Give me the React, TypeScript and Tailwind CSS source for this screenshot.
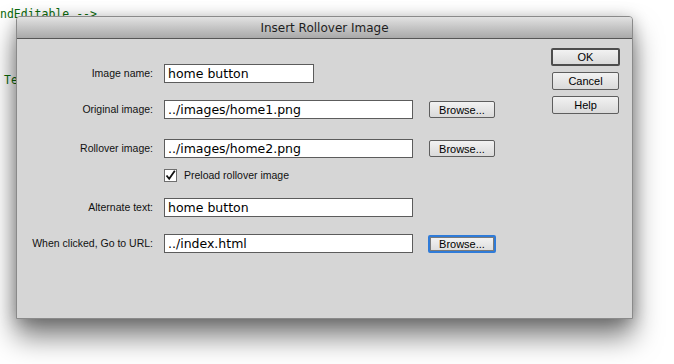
import React from 'react';

const labelFont = "font-['Liberation_Sans',Arial,sans-serif]";
const fieldFont = "font-['DejaVu_Sans',Verdana,sans-serif]";

const Field = ({ value, wide = true }: { value: string; wide?: boolean }) => (
  <div
    className={`h-[19px] ${wide ? 'w-[249px]' : 'w-[150px]'} border border-[#5c5c5c] bg-white pl-[3px] text-[12.5px] leading-[17px] text-black ${fieldFont} whitespace-nowrap overflow-hidden`}
  >
    {value}
  </div>
);

const Label = ({ children }: { children: React.ReactNode }) => (
  <div className={`w-[147px] shrink-0 pr-[11px] text-right text-[10.5px] text-[#111] ${labelFont}`}>
    {children}
  </div>
);

const Browse = ({ focused = false }: { focused?: boolean }) =>
  focused ? (
    <button className={`ml-[15px] h-[18px] w-[68px] rounded-[2px] border-2 border-[#2f7bd8] bg-linear-to-b from-[#f4f4f4] to-[#dcdcdc] text-[11px] leading-[12px] text-black shadow-[inset_0_0_0_1px_#7a7a7a] ${labelFont}`}>
      Browse...
    </button>
  ) : (
    <button className={`ml-[16px] h-[17px] w-[66px] rounded-[2px] border border-[#5e5e5e] bg-linear-to-b from-[#f2f2f2] to-[#dadada] text-[11px] leading-[14px] text-black ${labelFont}`}>
      Browse...
    </button>
  );

const SideButton = ({ children, main = false }: { children: React.ReactNode; main?: boolean }) => (
  <button
    className={`rounded-[2px] bg-linear-to-b from-[#f2f2f2] to-[#dadada] text-[11px] text-black ${labelFont} ${
      main ? 'h-[18px] w-[69px] border-2 border-[#4d4d4d] leading-[13px]' : 'h-[18px] w-[67px] border border-[#5e5e5e] leading-[15px]'
    }`}
  >
    {children}
  </button>
);

export default function App() {
  return (
    <div className="relative h-[364px] w-[674px] overflow-hidden bg-white">
      {/* editor behind the dialog */}
      <div className="pt-[6px] font-['DejaVu_Sans_Mono',monospace] text-[11.5px] text-[#0b6b0b]">
        <div className="leading-[16px]">ndEditable --&gt;</div>
        <div className="mt-[50px] pl-[4px] leading-[16px]">Te</div>
      </div>

      {/* dialog window */}
      <div className="absolute left-[16px] top-[16px] flex h-[303px] w-[617px] flex-col rounded-t-[4px] border border-[#8a8a8a] bg-[#d6d6d6] shadow-[0_18px_28px_rgba(0,0,0,0.5),0_2px_16px_rgba(0,0,0,0.25)]">
        <div
          className={`flex h-[22px] shrink-0 items-center justify-center rounded-t-[3px] border-b border-[#565656] bg-linear-to-b from-[#e2e2e2] to-[#a9a9a9] text-[12px] text-[#1e1e1e] ${fieldFont}`}
        >
          Insert Rollover Image
        </div>

        <div className="flex flex-1">
          <div className="flex flex-col pt-[25px]">
            <div className="flex items-center">
              <Label>Image name:</Label>
              <Field value="home button" wide={false} />
            </div>
            <div className="mt-[17px] flex items-center">
              <Label>Original image:</Label>
              <Field value="../images/home1.png" />
              <Browse />
            </div>
            <div className="mt-[20px] flex items-center">
              <Label>Rollover image:</Label>
              <Field value="../images/home2.png" />
              <Browse />
            </div>
            <div className="mt-[11px] flex h-[13px] items-center pl-[147px]">
              <div className="flex h-[13px] w-[13px] items-center justify-center border border-[#6e6e6e] bg-white">
                <svg width="11" height="11" viewBox="0 0 11 11">
                  <path d="M1.5 5.5 L4.2 8.8 L9.8 0.8" fill="none" stroke="#111" strokeWidth="1.8" />
                </svg>
              </div>
              <span className={`ml-[7px] text-[10.5px] leading-[13px] text-[#111] ${labelFont}`}>Preload rollover image</span>
            </div>
            <div className="mt-[16px] flex items-center">
              <Label>Alternate text:</Label>
              <Field value="home button" />
            </div>
            <div className="mt-[17px] flex items-center">
              <Label>When clicked, Go to URL:</Label>
              <Field value="../index.html" />
              <Browse focused />
            </div>
          </div>

          <div className="ml-auto mr-[12px] flex w-[69px] flex-col items-center gap-[6px] pt-[9px]">
            <SideButton main>OK</SideButton>
            <SideButton>Cancel</SideButton>
            <SideButton>Help</SideButton>
          </div>
        </div>
      </div>
    </div>
  );
}
